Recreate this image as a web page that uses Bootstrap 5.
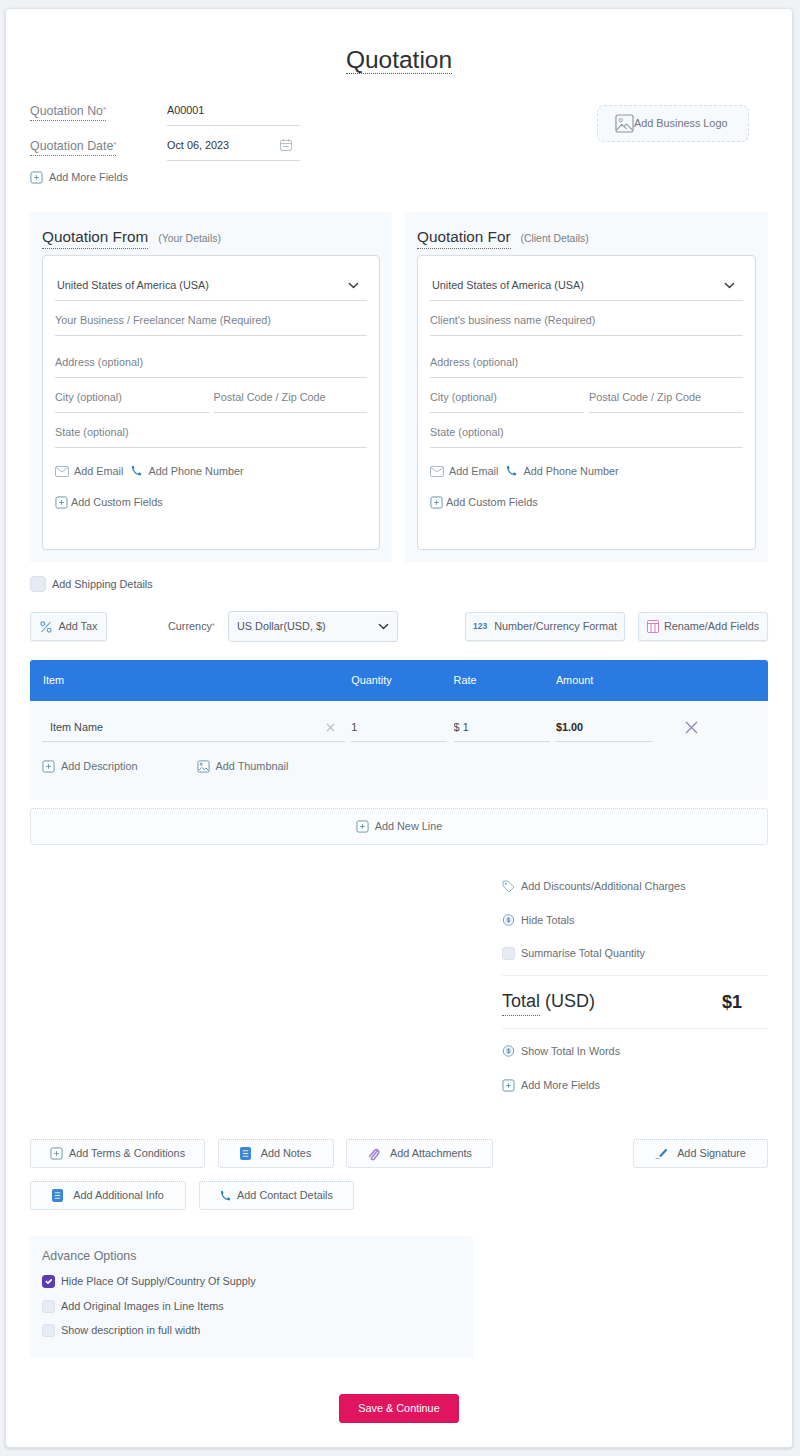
<!DOCTYPE html>
<html lang="en">
<head>
<meta charset="utf-8">
<title>Quotation</title>
<link rel="stylesheet" href="https://cdn.jsdelivr.net/npm/bootstrap@5.3.0/dist/css/bootstrap.min.css">
<style>
html,body{height:1456px;overflow:hidden}
body{background:#f0f3f6;font-family:"Liberation Sans",Arial,sans-serif;font-size:10.85px;color:#5f6770;padding:8px 7px 8px 5px}
.sheet{height:1440px;background:#fff;border:1px solid #dfe3e8;border-radius:4px;box-shadow:0 1px 3px rgba(90,110,140,.25);padding:0 24px}
.doc-title{font-size:24.5px;font-weight:400;line-height:27px;padding-top:2px;color:#2b3036;border-bottom:1px dotted #555;margin:35px 0 0;display:inline-block}
.head-block{margin-top:21px}
.meta-row{width:270px;height:31px}
.meta-row+.meta-row{margin-top:4px}
.meta-label{width:137px;flex:none;padding-top:7px;font-size:12.4px;color:#7c848c}
.meta-label span{display:inline-block;border-bottom:1px dotted #777;line-height:17px;height:18px}
.req{color:#c9808f;font-size:8px;top:-.35em}
.line-input.form-control,.line-input.form-select{height:31px;border:0;border-bottom:1px solid #d8dce1;border-radius:0;background-color:transparent;box-shadow:none;padding:0;font-size:10.85px;color:#555c64;font-family:inherit}
.line-input::placeholder{color:#7b838b;opacity:1}
.line-input.dark{color:#30353a}
.line-input.form-select{background-position:right 7px center;background-size:13px 11px;padding-left:2px;color:#444b52}
.date-ico{position:absolute;right:8px;top:9px}
.add-link{height:18px;font-size:10.85px;color:#666e76;white-space:nowrap}
.add-link svg{flex:none}
.gap6{gap:6px}
.gap3{gap:3px}
.mt7{margin-top:7px}
.logo-box{width:152px;height:37px;margin:10px 19px 0 0;padding-left:17px;background:#f7fafd;border:1px dashed #d6e0ea;border-radius:7px;font-size:10.85px;color:#6f7780}
.panels{gap:13px;margin-top:26px}
.panel{flex:1 1 0;height:350px;background:#f7fafd;padding:16px 12px 0}
.panel:first-child{flex:0 0 362px}
.panel-title{font-size:15.3px;line-height:18px;padding-bottom:2px;color:#2f353b;border-bottom:1px dotted #666;display:inline-block}
.panel-sub{font-size:10.4px;color:#767e86;margin-left:10px}
.panel-card{height:295px;margin-top:6px;background:#fff;border:1px solid #d5dce4;border-radius:4px;padding:14px 12px 0}
.f4{margin-top:4px}.f11{margin-top:11px}.f14{margin-top:14px}.f13{margin-top:13px}
.gap5{gap:5px}
.mail-ico{margin-right:5px}
.phone-ico{margin:0 6px 0 7px}
.ship{height:16px;margin-top:14px;gap:6px;color:#555c64}
.soft-check.form-check-input{width:16px;height:16px;margin:0;flex:none;background-color:#e7ebf6;border:1px solid #dbe0ee;border-radius:4px}
.soft-check.sm.form-check-input{width:13px;height:13px;border-radius:3px}
.soft-check.form-check-input:checked{background-color:#5b3db5;border-color:#5b3db5}
.tools{height:31px;margin-top:19px}
.tool-btn.btn{height:29px;padding:0;display:inline-flex;align-items:center;justify-content:center;font-size:10.85px;color:#585f67;background:#f7fafd;border:1px solid #d9e1e9;border-radius:3px;white-space:nowrap;box-shadow:0 1px 1px rgba(120,140,160,.12)}
.dash.btn{border:1px dotted #c6d0da;background:#fafcfe;box-shadow:none}
.w-tax{width:77px;gap:7px}
.w-num{width:160px;gap:7px;margin-right:13px}
.w-ren{width:130px;gap:5px}
.num-ico{font-size:8.5px;color:#3a7fc0}
.cur-label{width:60px;margin-left:61px;color:#5a6169}
.cur-select.form-select{width:170px;height:31px;padding:0 0 0 8px;font-size:10.85px;color:#4d545c;background-color:#f7fafd;border:1px solid #d5dde5;border-radius:3px;background-position:right 7px center;background-size:13px 11px;font-family:inherit}
.w-term{width:175px;gap:6px}
.w-notes{width:116px;gap:10px}
.w-att{width:147px;gap:10px}
.w-sig{width:135px;gap:9px}
.w-info{width:156px;gap:10px}
.w-cont{width:155px;gap:6px}
.item-grid{display:grid;grid-template-columns:303px 96px 96px 96px 1fr;column-gap:6.3px;padding-left:12px}
.item-head{margin-top:18px;height:41px;background:#2a7ae2;color:#fff;border-radius:3px 3px 0 0;align-items:center;font-size:10.85px}
.item-head div:first-child{padding-left:1px}
.item-body{height:99px;background:#f7fafd;padding-top:11px}
.item-input.form-control{height:30px;padding:1px 0 0;border:0;border-bottom:1px solid #d8dce1;border-radius:0;background:transparent;box-shadow:none;font-size:10.85px;color:#42484f;font-family:inherit}
.item-input.name{padding-left:8px}
.item-input.bold{font-weight:700;color:#23272b}
.clear-x{position:absolute;right:10px;top:11px}
.del-x{align-self:center;padding-left:27px}
.thumb{margin-left:53px}
.rowlinks{margin:15px 0 0 12px}
.new-line{height:37px;margin-top:8px;background:#fafcfe;border:1px dotted #cbd5df;border-radius:3px;color:#666e76}
.totals{margin-left:472px;width:266px}
.t1{margin-top:32px}.t2{margin-top:16px}.t3{margin-top:15px}.t4{margin-top:13px}
.rule{height:1px;background:#eef0f3}
.total-row{height:52px;padding-right:26px}
.total-word{font-size:18px;color:#2b3036}
.total-word u{text-decoration:none;display:inline-block;border-bottom:1px dotted #666;line-height:27px}
.total-val{font-size:18px;font-weight:700;color:#23272b}
.btn-gap{gap:12.5px}
.act1{margin-top:45px}
.act2{margin-top:13px}
.advance{width:443px;height:122px;margin-top:26px;background:#f7fafd;padding:12px}
.adv-title{font-size:12.4px;color:#6d757d;line-height:16px}
.adv-row{height:14px;gap:6px;color:#555c64;margin-top:10.5px}
.save-wrap{margin-top:36px}
.save-btn.btn{width:120px;height:29px;padding:0;background:#e0155f;border:1px solid #d8125a;color:#fff;font-size:10.85px;border-radius:3px}
</style>
</head>
<body>
<svg width="0" height="0" class="position-absolute">
<defs>
<symbol id="plus" viewBox="0 0 14 14"><rect x="1" y="1" width="12" height="12" rx="2" fill="#fff" stroke="#5f93a8"/><path d="M7 4.5v5M4.5 7h5" stroke="#5f93a8"/></symbol>
<symbol id="mail" viewBox="0 0 14 11"><rect x=".5" y=".5" width="13" height="10" rx="1.5" fill="none" stroke="#a9b9c6"/><path d="M1 1.5l6 4.5 6-4.5" fill="none" stroke="#a9b9c6"/></symbol>
<symbol id="phone" viewBox="0 0 12 12"><path d="M2.8 1.8C2.6 6 6 10 10.2 9.6" fill="none" stroke="#2f7fb5" stroke-width="1.3"/><path d="M1.6 1.4l2-.7 1 2.6-1.6.9zM8 8.7l1-1.5 2.3 1.2-.6 2z" fill="#2f7fb5"/></symbol>
<symbol id="doc" viewBox="0 0 12 14"><rect width="12" height="14" rx="2" fill="#3d86d6"/><path d="M3 4h6M3 7h6M3 10h6" stroke="#dcebfa" stroke-width="1.1"/></symbol>
<symbol id="dollar" viewBox="0 0 12 12"><circle cx="6" cy="6" r="5.2" fill="none" stroke="#6aa3bd"/><circle cx="6" cy="6" r="3.2" fill="#cfe2ec"/><path d="M7.2 4.6C6.6 4 4.9 4.1 4.9 5.1c0 1.3 2.4.6 2.4 1.9 0 1-1.8 1.1-2.5.4M6 3.4v5.2" fill="none" stroke="#4f87a5" stroke-width=".7"/></symbol>
<symbol id="tag" viewBox="0 0 14 14"><path d="M1.2 1.2h5.2l6.4 6.4-5.2 5.2-6.4-6.4z" fill="none" stroke="#7fa9bf" stroke-linejoin="round"/><circle cx="4" cy="4" r="1" fill="#7fa9bf"/></symbol>
<symbol id="pic" viewBox="0 0 20 20"><rect x="1" y="1" width="18" height="18" rx="2" fill="none" stroke="#8b949c" stroke-width="1.2"/><circle cx="6" cy="6.5" r="1.7" fill="none" stroke="#8b949c"/><path d="M1.5 17L7 11l4 3.5 1 1.2M9.5 13l2.5-2.5 6.5 6.5" fill="none" stroke="#8b949c" stroke-width="1.1"/></symbol>
<symbol id="pic2" viewBox="0 0 14 14"><rect x="1" y="1" width="12" height="12" rx="1.5" fill="#fff" stroke="#5f93a8"/><circle cx="4.5" cy="4.5" r="1.2" fill="none" stroke="#5f93a8"/><path d="M1.5 11.5L5 8l3 2.5 1.5-2 3 3" fill="none" stroke="#5f93a8"/></symbol>
</defs>
</svg>
<div class="sheet">
  <div class="text-center"><h1 class="doc-title">Quotation</h1></div>

  <div class="head-block d-flex justify-content-between align-items-start">
    <div>
      <div class="meta-row d-flex">
        <div class="meta-label"><span>Quotation No<sup class="req">*</sup></span></div>
        <input class="line-input dark form-control" value="A00001" aria-label="Quotation number">
      </div>
      <div class="meta-row d-flex">
        <div class="meta-label"><span>Quotation Date<sup class="req">*</sup></span></div>
        <div class="position-relative flex-grow-1">
          <input class="line-input dark form-control" value="Oct 06, 2023" aria-label="Quotation date">
          <svg class="date-ico" width="12" height="12" viewBox="0 0 12 12"><rect x=".5" y="1.5" width="11" height="10" rx="1.5" fill="none" stroke="#b5bdc5"/><path d="M.5 4.5h11M3.5 0v2.5M8.5 0v2.5M3.5 7.5h5" fill="none" stroke="#b5bdc5"/></svg>
        </div>
      </div>
      <div class="add-link d-flex align-items-center gap6 mt7"><svg width="13" height="13"><use href="#plus"/></svg><span>Add More Fields</span></div>
    </div>
    <div class="logo-box d-flex align-items-center"><svg width="19" height="19"><use href="#pic"/></svg><span>Add Business Logo</span></div>
  </div>

  <div class="panels d-flex">
    <section class="panel">
      <div><span class="panel-title">Quotation From</span><span class="panel-sub">(Your Details)</span></div>
      <div class="panel-card">
        <select class="line-input form-select" aria-label="Country"><option>United States of America (USA)</option></select>
        <input class="line-input form-control f4" placeholder="Your Business / Freelancer Name (Required)">
        <input class="line-input form-control f11" placeholder="Address (optional)">
        <div class="d-flex gap5 f4"><input class="line-input form-control" placeholder="City (optional)"><input class="line-input form-control" placeholder="Postal Code / Zip Code"></div>
        <input class="line-input form-control f4" placeholder="State (optional)">
        <div class="add-link d-flex align-items-center f14"><svg class="mail-ico" width="14" height="11"><use href="#mail"/></svg><span>Add Email</span><svg class="phone-ico" width="12" height="12"><use href="#phone"/></svg><span>Add Phone Number</span></div>
        <div class="add-link d-flex align-items-center gap3 f13"><svg width="13" height="13"><use href="#plus"/></svg><span>Add Custom Fields</span></div>
      </div>
    </section>
    <section class="panel">
      <div><span class="panel-title">Quotation For</span><span class="panel-sub">(Client Details)</span></div>
      <div class="panel-card">
        <select class="line-input form-select" aria-label="Client country"><option>United States of America (USA)</option></select>
        <input class="line-input form-control f4" placeholder="Client's business name (Required)">
        <input class="line-input form-control f11" placeholder="Address (optional)">
        <div class="d-flex gap5 f4"><input class="line-input form-control" placeholder="City (optional)"><input class="line-input form-control" placeholder="Postal Code / Zip Code"></div>
        <input class="line-input form-control f4" placeholder="State (optional)">
        <div class="add-link d-flex align-items-center f14"><svg class="mail-ico" width="14" height="11"><use href="#mail"/></svg><span>Add Email</span><svg class="phone-ico" width="12" height="12"><use href="#phone"/></svg><span>Add Phone Number</span></div>
        <div class="add-link d-flex align-items-center gap3 f13"><svg width="13" height="13"><use href="#plus"/></svg><span>Add Custom Fields</span></div>
      </div>
    </section>
  </div>

  <div class="ship d-flex align-items-center"><input type="checkbox" class="soft-check form-check-input" aria-label="Add Shipping Details"><span>Add Shipping Details</span></div>

  <div class="tools d-flex align-items-center">
    <button class="tool-btn w-tax btn" type="button"><svg width="12" height="12" viewBox="0 0 12 12"><circle cx="2.8" cy="2.8" r="1.9" fill="none" stroke="#5b9bc4" stroke-width="1.1"/><circle cx="9.2" cy="9.2" r="1.9" fill="none" stroke="#5b9bc4" stroke-width="1.1"/><path d="M10.5 1L1.5 11" stroke="#5b9bc4" stroke-width="1.1"/></svg>Add Tax</button>
    <div class="cur-label">Currency<sup class="req">*</sup></div>
    <select class="cur-select form-select" aria-label="Currency"><option>US Dollar(USD, $)</option></select>
    <button class="tool-btn w-num btn ms-auto" type="button"><b class="num-ico">123</b>Number/Currency Format</button>
    <button class="tool-btn w-ren btn" type="button"><svg width="12" height="13" viewBox="0 0 12 13"><rect x=".5" y=".5" width="11" height="12" rx="1" fill="none" stroke="#d77fc0"/><path d="M.5 3.5h11M4 3.5v9M8 3.5v9" fill="none" stroke="#d77fc0"/></svg>Rename/Add Fields</button>
  </div>

  <div class="item-head item-grid"><div>Item</div><div>Quantity</div><div>Rate</div><div>Amount</div><div></div></div>
  <div class="item-body">
    <div class="item-grid">
      <div class="position-relative"><input class="item-input name form-control" value="Item Name" aria-label="Item name"><svg class="clear-x" width="9" height="9" viewBox="0 0 9 9"><path d="M1 1l7 7M8 1L1 8" stroke="#b9bfc5" stroke-width="1.2"/></svg></div>
      <input class="item-input form-control" value="1" aria-label="Quantity">
      <input class="item-input form-control" value="$ 1" aria-label="Rate">
      <input class="item-input bold form-control" value="$1.00" aria-label="Amount">
      <div class="del-x"><svg width="13" height="13" viewBox="0 0 13 13" class="d-block"><path d="M1 1l11 11M12 1L1 12" stroke="#8d7bc0" stroke-width="1.1"/></svg></div>
    </div>
    <div class="rowlinks add-link d-flex align-items-center gap6">
      <svg width="13" height="13"><use href="#plus"/></svg><span>Add Description</span>
      <svg class="thumb" width="13" height="13"><use href="#pic2"/></svg><span>Add Thumbnail</span>
    </div>
  </div>
  <div class="new-line add-link d-flex align-items-center justify-content-center gap6"><svg width="13" height="13"><use href="#plus"/></svg><span>Add New Line</span></div>

  <div class="totals">
    <div class="add-link d-flex align-items-center gap6 t1"><svg width="13" height="13"><use href="#tag"/></svg><span>Add Discounts/Additional Charges</span></div>
    <div class="add-link d-flex align-items-center gap6 t2"><svg width="13" height="12"><use href="#dollar"/></svg><span>Hide Totals</span></div>
    <div class="add-link d-flex align-items-center gap6 t3"><input type="checkbox" class="soft-check sm form-check-input" aria-label="Summarise Total Quantity"><span>Summarise Total Quantity</span></div>
    <div class="rule t4"></div>
    <div class="total-row d-flex justify-content-between align-items-center"><div class="total-word"><u>Total</u> (USD)</div><div class="total-val">$1</div></div>
    <div class="rule"></div>
    <div class="add-link d-flex align-items-center gap6 t4"><svg width="13" height="12"><use href="#dollar"/></svg><span>Show Total In Words</span></div>
    <div class="add-link d-flex align-items-center gap6 t2"><svg width="13" height="13"><use href="#plus"/></svg><span>Add More Fields</span></div>
  </div>

  <div class="d-flex btn-gap act1">
    <button class="tool-btn dash w-term btn" type="button"><svg width="13" height="13"><use href="#plus"/></svg>Add Terms &amp; Conditions</button>
    <button class="tool-btn dash w-notes btn" type="button"><svg width="11" height="13"><use href="#doc"/></svg>Add Notes</button>
    <button class="tool-btn dash w-att btn" type="button"><svg width="13" height="14" viewBox="0 0 13 14"><path d="M10.5 3.5L4.8 10.5c-1.5 1.7 1 3 2.4 1.4l4-5.2c2-2.6-1.6-5.6-3.8-3L2.6 9.2" fill="none" stroke="#a07fd0" stroke-width="1.5" stroke-linecap="round"/></svg>Add Attachments</button>
    <button class="tool-btn dash w-sig btn ms-auto" type="button"><svg width="13" height="11" viewBox="0 0 13 11"><path d="M5 8.5L11.5 1.5" stroke="#2f7fc0" stroke-width="2.2"/><path d="M.5 10.5h4" stroke="#8fb6d6"/></svg>Add Signature</button>
  </div>
  <div class="d-flex btn-gap act2">
    <button class="tool-btn dash w-info btn" type="button"><svg width="11" height="13"><use href="#doc"/></svg>Add Additional Info</button>
    <button class="tool-btn dash w-cont btn" type="button"><svg width="12" height="12"><use href="#phone"/></svg>Add Contact Details</button>
  </div>

  <div class="advance">
    <div class="adv-title">Advance Options</div>
    <div class="adv-row d-flex align-items-center"><input type="checkbox" checked class="soft-check sm form-check-input" aria-label="Hide Place Of Supply"><span>Hide Place Of Supply/Country Of Supply</span></div>
    <div class="adv-row d-flex align-items-center"><input type="checkbox" class="soft-check sm form-check-input" aria-label="Add Original Images"><span>Add Original Images in Line Items</span></div>
    <div class="adv-row d-flex align-items-center"><input type="checkbox" class="soft-check sm form-check-input" aria-label="Show description in full width"><span>Show description in full width</span></div>
  </div>

  <div class="save-wrap text-center"><button class="save-btn btn" type="button">Save &amp; Continue</button></div>
</div>
</body>
</html>
